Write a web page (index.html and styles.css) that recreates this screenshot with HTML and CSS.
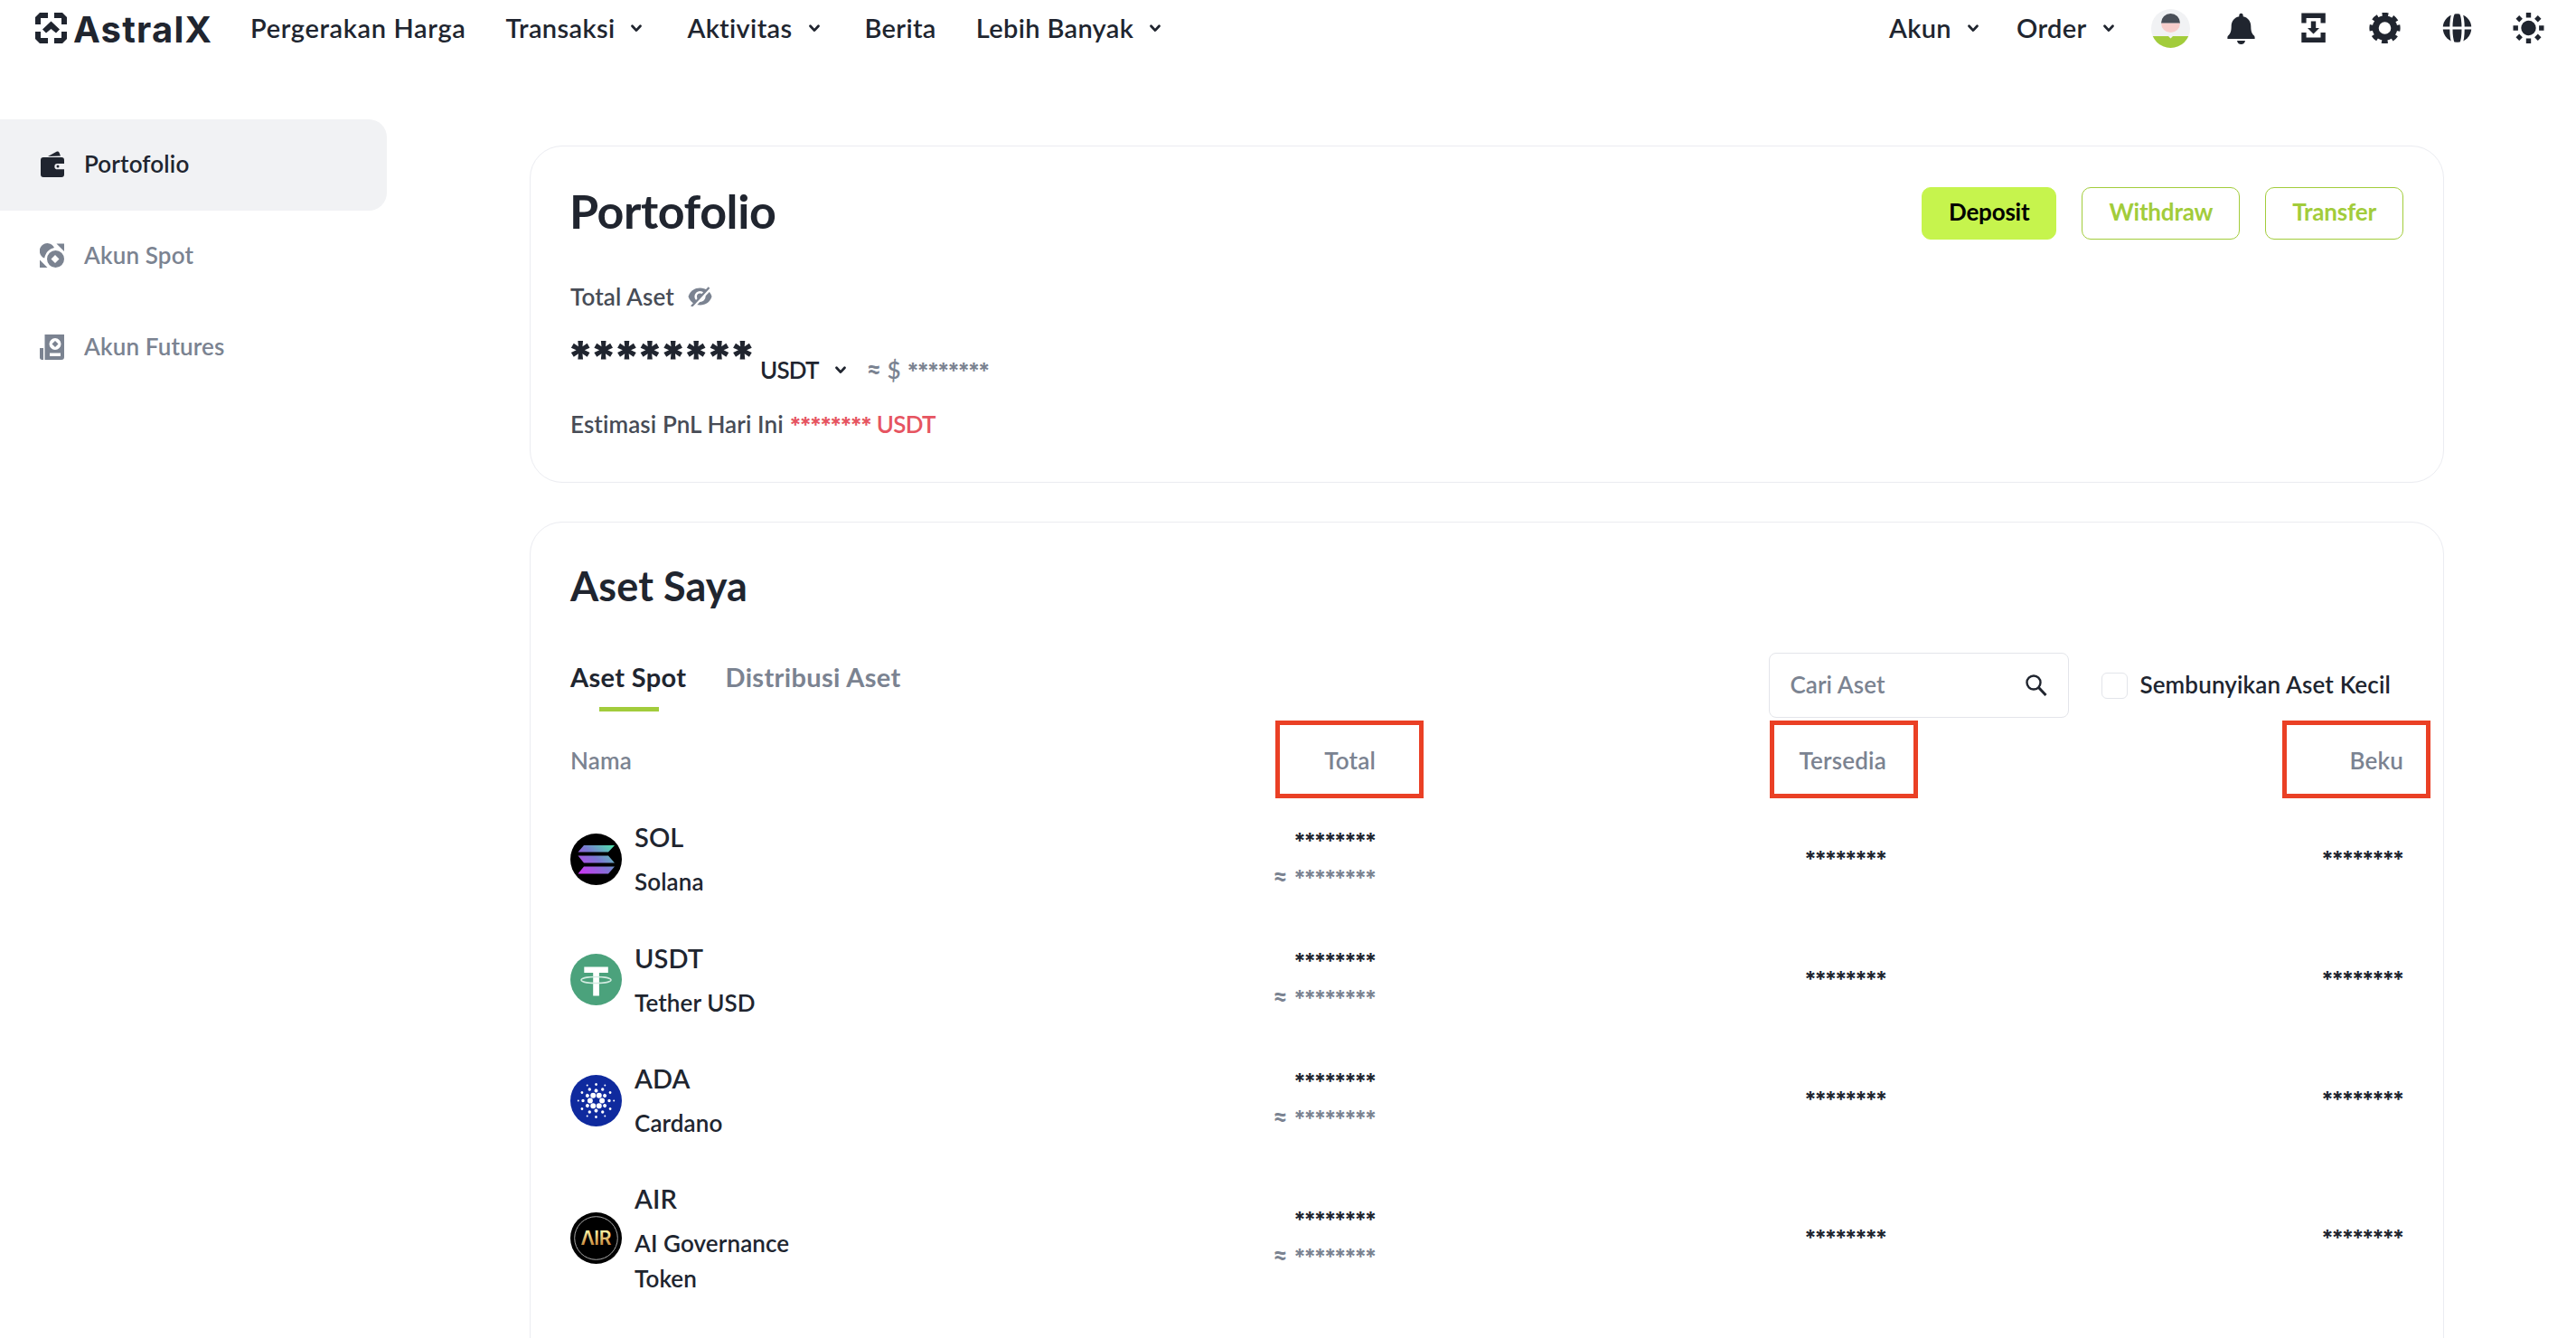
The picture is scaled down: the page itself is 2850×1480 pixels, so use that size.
FILE: index.html
```
<!DOCTYPE html>
<html lang="id">
<head>
<meta charset="UTF-8" />
<meta name="viewport" content="width=device-width, initial-scale=1" />
<title>AstralX - Portofolio</title>
<link rel="stylesheet" href="styles.css">
</head>
<body>
  <svg width="0" height="0" class="defs">
    <symbol id="chev" viewBox="0 0 24 24"><path d="M7.5 9.8 12 14.6 16.5 9.8" fill="none" stroke="currentColor" stroke-width="2.8" stroke-linecap="round" stroke-linejoin="round"/></symbol>
  </svg>

  <header class="topbar">
    <a class="logo">
      <svg width="35" height="34" viewBox="0 0 35 34" fill="currentColor">
        <path d="M0 13V5L5 0h9v6H6v7zM21 0h9l5 5v8h-6V6h-8zM0 21h6v7h8v6H5l-5-5zM29 21h6v8l-5 5h-9v-6h8z"/>
        <path d="M17.5 9.5 27 18.5l-4 4-5.5-4.5-5.5 4.5-4-4z"/>
      </svg>
      <span>AstralX</span>
    </a>
    <nav class="menu">
      <a class="first">Pergerakan Harga</a>
      <a>Transaksi<svg class="chev"><use href="#chev"/></svg></a>
      <a>Aktivitas<svg class="chev"><use href="#chev"/></svg></a>
      <a>Berita</a>
      <a>Lebih Banyak<svg class="chev"><use href="#chev"/></svg></a>
    </nav>
    <nav class="menu user">
      <a>Akun<svg class="chev"><use href="#chev"/></svg></a>
      <a>Order<svg class="chev"><use href="#chev"/></svg></a>
    </nav>
    <div class="tools">
      <svg class="avatar" viewBox="0 0 43 43">
        <clipPath id="av"><circle cx="21.5" cy="21.5" r="21.5"/></clipPath>
        <circle cx="21.5" cy="21.5" r="21.5" fill="#f1f2f4"/>
        <path d="M11 15.5a10.5 10.5 0 0 0 21 0z" fill="#f8cdcb"/>
        <path d="M11 15.5a10.5 10.5 0 0 1 21 0z" fill="#4a4f58"/>
        <path d="M0 30h19l2.5 2.5L24 30h19v13H0z" fill="#a2cc3b" clip-path="url(#av)"/>
      </svg>
      <svg viewBox="0 0 35 35" fill="currentColor">
        <path d="M17.5.8c1.5 0 2.2 1 2.2 2.5v.9c5.3 1 8.6 5.2 8.6 10.8 0 6 1.4 8.5 3.3 10.3.9.9 1 1.4 1 2.2v1.5H2.400v-1.5c0-.8.1-1.3 1-2.2C5.300 23.500 6.700 21 6.700 15c0-5.600 3.300-9.800 8.600-10.800v-.9c0-1.500.7-2.500 2.200-2.500zM13 31h9c-.5 2.500-2 4-4.500 4S13.500 33.500 13 31z"/>
      </svg>
      <svg viewBox="0 0 35 35" fill="currentColor">
        <path d="M4.3.5h26.5v11h-5.3V6H9.600v5.500H4.300zM4.300 22h5.300v5.500h15.900V22h5.300v11H4.300z"/>
        <path d="M14.8 9.500h5.400V17h3.800l-6.500 6.500L11 17h3.800z"/>
      </svg>
      <svg viewBox="0 0 35 35" fill="none" stroke="currentColor">
        <circle cx="17.5" cy="17" r="10.3" stroke-width="7"/>
        <circle cx="17.5" cy="17" r="14.6" stroke-width="5" stroke-dasharray="6.4 5.067" transform="rotate(-12.6 17.5 17)"/>
      </svg>
      <svg viewBox="0 0 35 35">
        <circle cx="17.5" cy="17" r="15.8" fill="currentColor"/>
        <path d="M0 17h35M13.5 0C10 7 10 27 13.500 35M21.500 0c3.500 7 3.500 28 0 35" fill="none" stroke="#fff" stroke-width="3.2"/>
      </svg>
      <svg viewBox="0 0 35 35" fill="currentColor">
        <circle cx="17.5" cy="17" r="8.2"/>
        <path d="M14.800 0h5.400v5.400h-5.400zM14.800 28.600h5.400V34h-5.400zM.5 14.300h5.400v5.400H.5zM29.100 14.300h5.400v5.400h-5.400zM7.200 3l3.700 3.700-3.700 3.700-3.700-3.700zM27.800 3l3.700 3.700-3.700 3.700-3.700-3.700zM7.200 23.600l3.700 3.700L7.200 31l-3.700-3.700zM27.800 23.600l3.700 3.700-3.700 3.700-3.700-3.700z"/>
      </svg>
    </div>
  </header>

  <div class="layout">
    <aside class="sidebar">
      <a class="side-item active">
        <svg viewBox="0 0 28 30" fill="currentColor">
          <path d="M9 6 18.500.8c1.400-.6 2.400-.3 3 .9L23 5.500z"/>
          <path fill-rule="evenodd" d="M4 7h20a3 3 0 0 1 3 3v4h-7.500a3 3 0 0 0 0 6.300H27V26a3 3 0 0 1-3 3H4a3 3 0 0 1-3-3V10a3 3 0 0 1 3-3z"/>
          <circle cx="20" cy="17" r="1.5"/>
        </svg>
        <span>Portofolio</span>
      </a>
      <a class="side-item">
        <svg viewBox="0 0 28 30" fill="currentColor">
          <path d="M18.500 1.500H27V10zM0 19.500 8.500 28H0z"/>
          <path d="M5.200 17.500A8.500 8.500 0 1 1 16 6C10 7.500 6.500 11.500 5.200 17.500z"/>
          <path fill-rule="evenodd" d="M17.500 9a9.500 9.500 0 1 0 0 19 9.500 9.500 0 0 0 0-19zm-.5 5 4.500 4.500-4.500 4.500-4.500-4.500z"/>
        </svg>
        <span>Akun Spot</span>
      </a>
      <a class="side-item">
        <svg viewBox="0 0 28 30" fill="currentColor">
          <path d="M0 16h4v13H2.500C1 29 0 28 0 26.500z"/>
          <path fill-rule="evenodd" d="M5.500 1H27v25a3 3 0 0 1-3 3H5.500zM17 5a6.500 6.500 0 1 0 0 13 6.500 6.500 0 0 0 0-13zM11 21.500V25h12v-3.500z"/>
          <path d="m17 8 3.500 3.500L17 15l-3.500-3.500z"/>
        </svg>
        <span>Akun Futures</span>
      </a>
    </aside>

    <main class="content">
      <section class="card summary">
        <div class="head">
          <h1>Portofolio</h1>
          <div class="actions">
            <button class="btn primary">Deposit</button>
            <button class="btn">Withdraw</button>
            <button class="btn">Transfer</button>
          </div>
        </div>
        <div class="label">Total Aset
          <svg class="eye" viewBox="0 0 27 22">
            <path d="M13.500 1.500C20 1.500 24.500 5 26.500 11c-2 6-6.500 9.500-13 9.500S2.500 17 .5 11c2-6 6.500-9.500 13-9.500z" fill="#7b8391"/>
            <circle cx="13.5" cy="11" r="4.8" fill="none" stroke="#fff" stroke-width="2.6"/>
            <path d="M6 22.500 25.500 2" stroke="#fff" stroke-width="3"/>
            <path d="M4 22 23.500 1" stroke="#7b8391" stroke-width="2.4"/>
          </svg>
        </div>
        <div class="balance">
          <b class="big stars">********</b>
          <span class="unit">USDT<svg class="chev"><use href="#chev"/></svg></span>
          <span class="fiat"><i class="approx">≈</i> $ <i class="stars">********</i></span>
        </div>
        <div class="pnl">Estimasi PnL Hari Ini <span><i class="stars">********</i> USDT</span></div>
      </section>

      <section class="card assets">
        <h2>Aset Saya</h2>
        <div class="toolbar">
          <div class="tabs">
            <a class="on">Aset Spot</a>
            <a>Distribusi Aset</a>
          </div>
          <div class="search">
            <span>Cari Aset</span>
            <svg width="24" height="24" viewBox="0 0 24 24" fill="none" stroke="#20252f" stroke-width="2.4"><circle cx="9" cy="9" r="7.5"/><path d="m14.500 14.500 8 8.500" stroke-width="3"/></svg>
          </div>
          <label class="hide-small"><span class="check"></span><span>Sembunyikan Aset Kecil</span></label>
        </div>

        <div class="row thead">
          <span>Nama</span>
          <span class="mark m-total">Total</span>
          <span class="mark m-free">Tersedia</span>
          <span class="mark m-frozen">Beku</span>
        </div>

        <div class="row">
          <div class="coin">
            <svg viewBox="0 0 57 57">
              <linearGradient id="sol" gradientUnits="userSpaceOnUse" x1="46" y1="10" x2="14" y2="47"><stop offset="0" stop-color="#4de8a8"/><stop offset=".5" stop-color="#7a78d2"/><stop offset="1" stop-color="#cc35f2"/></linearGradient>
              <circle cx="28.5" cy="28.5" r="28.5"/>
              <path fill="url(#sol)" d="M15 13h34l-7 7.500H8.500zM8.500 24.500H42l7 8H15zM15 36.500h34L42 44.500H8.500z"/>
            </svg>
            <div><b>SOL</b><p>Solana</p></div>
          </div>
          <div class="num"><i class="stars">********</i><small><i class="approx">≈</i> <i class="stars">********</i></small></div>
          <div class="num"><i class="stars">********</i></div>
          <div class="num"><i class="stars">********</i></div>
        </div>

        <div class="row">
          <div class="coin">
            <svg viewBox="0 0 57 57">
              <circle cx="28.5" cy="28.5" r="28.5" fill="#4ba27c"/>
              <path fill="#fff" d="M15.300 14.500h26.500v6.500h-9.900v25.500h-6.700V21h-9.900z"/>
              <ellipse cx="28.5" cy="29" rx="16.5" ry="3.5" fill="none" stroke="#d3ebe0" stroke-width="1.5"/>
            </svg>
            <div><b>USDT</b><p>Tether USD</p></div>
          </div>
          <div class="num"><i class="stars">********</i><small><i class="approx">≈</i> <i class="stars">********</i></small></div>
          <div class="num"><i class="stars">********</i></div>
          <div class="num"><i class="stars">********</i></div>
        </div>

        <div class="row">
          <div class="coin">
            <svg viewBox="0 0 57 57">
              <circle cx="28.5" cy="28.5" r="28.5" fill="#0f2a9e"/>
              <!-- every ring is six round dots -->
              <g fill="none" stroke="#fff" stroke-linecap="round">
                <circle cx="28.5" cy="28.5" r="6.6" pathLength="60" stroke-dasharray="0 10" stroke-width="6"/>
                <circle cx="28.5" cy="28.5" r="11.1" pathLength="60" stroke-dasharray="0 10" stroke-width="4" transform="rotate(30 28.5 28.5)"/>
                <circle cx="28.5" cy="28.5" r="14.5" pathLength="60" stroke-dasharray="0 10" stroke-width="3.4"/>
                <circle cx="28.5" cy="28.5" r="18" pathLength="60" stroke-dasharray="0 10" stroke-width="2.8" transform="rotate(30 28.5 28.5)"/>
                <circle cx="28.5" cy="28.5" r="19.7" pathLength="60" stroke-dasharray="0 10" stroke-width="2"/>
              </g>
            </svg>
            <div><b>ADA</b><p>Cardano</p></div>
          </div>
          <div class="num"><i class="stars">********</i><small><i class="approx">≈</i> <i class="stars">********</i></small></div>
          <div class="num"><i class="stars">********</i></div>
          <div class="num"><i class="stars">********</i></div>
        </div>

        <div class="row">
          <div class="coin">
            <svg viewBox="0 0 57 57">
              <linearGradient id="gold" x1="0" y1="0" x2="0" y2="1"><stop offset=".2" stop-color="#fbf0a0"/><stop offset=".8" stop-color="#c98a3c"/></linearGradient>
              <circle cx="28.5" cy="28.5" r="28.5"/>
              <circle cx="28.5" cy="28.5" r="23.8" fill="none" stroke="#a9a9a9"/>
              <text x="28.5" y="36.3" text-anchor="middle" textLength="34" class="air" fill="url(#gold)">ΛIR</text>
            </svg>
            <div><b>AIR</b><p>AI Governance Token</p></div>
          </div>
          <div class="num"><i class="stars">********</i><small><i class="approx">≈</i> <i class="stars">********</i></small></div>
          <div class="num"><i class="stars">********</i></div>
          <div class="num"><i class="stars">********</i></div>
        </div>
      </section>
    </main>
  </div>
</body>
</html>
```
FILE: styles.css
```
:root{
  --ink:#20252f;
  --mid:#474c56;
  --muted:#7b8391;
  --green:#a2cc3b;
  --lime:#c6f44d;
  --red:#e65561;
  --mark:#ea4025;
  --border:#ebecf1;
}
*,*::after{box-sizing:border-box}
body{
  margin:0;
  height:1480px;
  overflow:hidden;
  background:#fff;
  color:var(--ink);
  font:600 26px/40px Lato, "Open Sans", sans-serif;
  letter-spacing:.1px;
}
h1,h2,p{margin:0}
i{font-style:normal}
b{font-weight:600}
.defs{position:absolute}

/* header */
.topbar{
  height:62px;
  padding:0 35px 0 39px;
  display:flex;
  align-items:center;
  font-size:29px;
  letter-spacing:.35px;
}
.logo{
  display:flex;
  align-items:center;
  gap:7px;
  width:238px;
  height:66px;
}
.logo span{
  padding-top:3px;
  font:700 40px/60px Inter, sans-serif;
  letter-spacing:1.2px;
}
.menu{
  display:flex;
  gap:44px;
}
.menu a{display:flex; align-items:center; height:60px; line-height:56px}
.menu .first{letter-spacing:.65px}
.chev{width:24px; height:24px; margin-left:12px}
.menu.user{margin-left:auto; gap:36px}
.tools{
  display:flex;
  align-items:center;
  gap:44.5px;
  margin-left:35px;
}
.tools svg{width:35px; height:35px; display:block}
.tools .avatar{width:43px; height:43px; margin-right:-5px}

.layout{display:flex; height:1418px; overflow:hidden}

/* sidebar */
.sidebar{
  width:428px;
  margin-right:158px;
  padding-top:70px;
}
.side-item{
  display:flex;
  align-items:center;
  gap:21px;
  height:101px;
  padding-left:44px;
  color:var(--muted);
  letter-spacing:.15px;
}
.side-item svg{width:28px; height:30px; margin-top:-1px}
.side-item span{padding-bottom:3px}
.side-item.active{
  background:#f1f2f4;
  color:var(--ink);
  border-radius:0 20px 20px 0;
}

/* cards */
.content{width:2118px; padding-top:99px}
.card{
  border:1px solid var(--border);
  border-radius:36px;
  padding:45px 44px 0;
}
.summary{height:373px}
.assets{height:1000px; margin-top:43px; padding-top:42px}
.head{display:flex; justify-content:space-between; height:58px}
h1{font-size:52px; line-height:53px; font-weight:700; letter-spacing:-.4px; margin-left:-1px}
h2{font-size:45px; line-height:56px; font-weight:700}
.actions{display:flex; gap:28px}
.btn{
  height:58px;
  padding:0 29px 4px;
  border:1px solid var(--green);
  border-radius:10px;
  background:#fff;
  color:var(--green);
  font:700 26px/50px Lato, sans-serif;
  letter-spacing:-.2px;
}
.btn.primary{
  background:var(--lime);
  border-color:var(--lime);
  color:#000;
}
.label{
  display:flex;
  align-items:center;
  gap:15px;
  margin-top:43px;
  color:var(--mid);
}
.eye{width:27px; height:22px}
.stars{
  font-family:Inter, sans-serif;
  font-size:24px;
  font-weight:700;
  letter-spacing:-2.2px;
}
.approx{font-weight:900; font-size:28px; line-height:20px}
.balance{
  display:flex;
  align-items:flex-end;
  height:66px;
  margin-top:18px;
  line-height:46px;
}
.big.stars{
  margin:0 0 4px -4px;
  font-size:50px;
  font-weight:900;
  line-height:66px;
  letter-spacing:-4.8px;
}
.unit{
  display:flex;
  align-items:center;
  margin-left:9px;
  letter-spacing:-.8px;
}
.unit .chev{margin-left:12px}
.fiat{margin-left:17px; line-height:43px; color:var(--muted)}
.pnl{margin-top:17px; color:var(--mid)}
.pnl span{color:var(--red); letter-spacing:-.7px}
.pnl .stars{margin-right:1px; letter-spacing:-2.2px}

/* asset table */
.toolbar{
  display:flex;
  align-items:flex-start;
  height:72px;
  margin-top:46px;
}
.tabs{
  display:flex;
  gap:43px;
  flex:1;
  font-size:29px;
  line-height:54px;
  font-weight:700;
  color:var(--muted);
  letter-spacing:.35px;
}
.tabs .on{position:relative; color:var(--ink)}
.tabs .on::after{
  content:"";
  position:absolute;
  left:32px; top:60px;
  width:66px; height:5px;
  background:var(--green);
}
.search{
  display:flex;
  align-items:center;
  justify-content:space-between;
  width:332px;
  height:72px;
  padding:0 23px 0 22px;
  border:1px solid #e3e5ea;
  border-radius:8px;
  color:var(--muted);
}
.search span{padding-bottom:2px}
.hide-small{
  display:flex;
  align-items:center;
  gap:13px;
  height:72px;
  margin:0 14px 0 36px;
  letter-spacing:.15px;
}
.hide-small span:last-child{padding-bottom:2px}
.check{
  width:29px; height:29px;
  border:1px solid #e3e5ea;
  border-radius:6px;
}
.row{
  display:grid;
  grid-template-columns:400px 491px 565px 572px;
  align-items:center;
  padding:22.4px 0;
}
.thead{
  height:86px;
  margin-top:4px;
  padding:0;
  color:var(--muted);
  letter-spacing:.2px;
}
.mark{position:relative; text-align:right}
.mark::after{
  content:"";
  position:absolute;
  top:-24px;
  width:164px; height:86px;
  border:5px solid var(--mark);
}
.m-total::after{right:-53px}
.m-free::after{right:-35px}
.m-frozen::after{right:-30px}
.coin{
  display:flex;
  align-items:center;
  gap:14px;
}
.coin svg{width:57px; height:57px; flex:none}
.coin b{display:block; font-size:29px; line-height:40px; margin-bottom:10px}
.coin p{width:180px; line-height:38.5px}
.air{font:600 21px Inter, sans-serif}
.num{text-align:right; padding-right:1px}
.num > .stars{display:block}
.num small{display:block; font-size:26px; line-height:39px; color:var(--muted)}
```
